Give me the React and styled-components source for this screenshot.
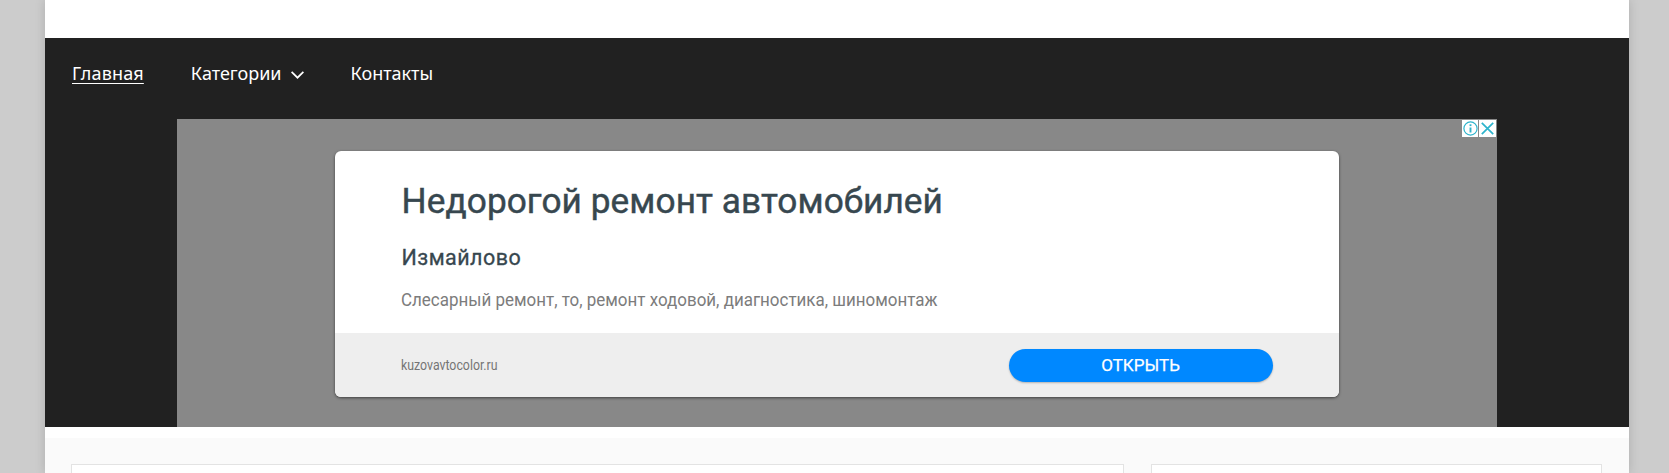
import React from "react";
import styled, { createGlobalStyle } from "styled-components";

const Global = createGlobalStyle`
  html, body { margin: 0; padding: 0; height: 473px; overflow: hidden; background: #cccccc; }
  * { box-sizing: border-box; }
`;
const Page = styled.div`
  width: 1584px; height: 473px; margin-left: 45px; background: #fff; overflow: hidden;
  box-shadow: 0 0 10px rgba(0,0,0,.15);
`;
const TopBar = styled.div`height: 38px; background: #fff;`;
const Nav = styled.div`
  background: #212121; height: 389px; display: flex; flex-direction: column;
`;
const Menu = styled.nav`
  height: 81px; display: flex; align-items: center; padding: 0 0 12px 27px; gap: 47px;
`;
const MenuLink = styled.a`
  font: 400 18px/24px "Noto Sans", sans-serif; color: #fff; display: inline-flex; align-items: center;
  text-decoration: ${p => (p.$active ? "underline" : "none")}; text-underline-offset: 3px; text-decoration-thickness: 1px;
  letter-spacing: ${p => (p.$active ? ".15px" : "0")};
`;
const Chevron = styled.svg`width: 15px; height: 15px; margin-left: 8px; margin-right: -1px; margin-top: 3px;`;
const Ad = styled.div`
  position: relative; width: 1320px; height: 308px; margin-left: 132px; background: #888888;
  display: flex; justify-content: center; align-items: flex-start; padding: 32px 1px 0 0;
`;
const Badges = styled.div`position: absolute; top: 1px; right: 1px; display: flex; gap: 1px;`;
const Badge = styled.div`
  width: ${p => p.$w}px; height: 17px; background: #fff; display: flex; align-items: center; justify-content: center;
`;
const Card = styled.div`
  width: 1004px; height: 246px; background: #fff; border-radius: 6px; overflow: hidden;
  box-shadow: 0 1px 3px rgba(0,0,0,.55); display: flex; flex-direction: column;
`;
const Body = styled.div`flex: 1; padding: 30px 66px 0 67px; font-family: Roboto, sans-serif;`;
const Title = styled.div`font: 400 35.2px/40px Roboto, sans-serif; color: #37474f; letter-spacing: .08px; -webkit-text-stroke: .45px #37474f;`;
const Sub = styled.div`font: 400 21.5px/24px Roboto, sans-serif; color: #37474f; margin-top: 25px; letter-spacing: .45px; -webkit-text-stroke: .3px #37474f;`;
const Desc = styled.div`
  font: 400 19px/22px Roboto, sans-serif; color: #7c7c7c; margin-top: 19px; margin-left: -1px; white-space: nowrap;
  transform: scaleX(.893); transform-origin: left;
`;
const Foot = styled.div`
  height: 64px; background: #eeeeee; display: flex; align-items: center; justify-content: space-between;
  padding: 0 66px;
`;
const Domain = styled.div`
  font: 400 14.5px/18px Roboto, sans-serif; color: #757575; transform: scaleX(.85); transform-origin: left; white-space: nowrap; margin-top: 2px;
`;
const Button = styled.div`
  width: 264px; height: 33px; border-radius: 17px; background: #0088ff; color: #fff;
  display: flex; align-items: center; justify-content: center; font: 400 17px/20px Roboto, sans-serif;
  -webkit-text-stroke: .25px #fff; box-shadow: 0 1px 2px rgba(0,0,0,.25);
`;
const Gap = styled.div`height: 11px; background: #fff;`;
const Content = styled.div`
  height: 35px; background: #fafafa; padding: 26px 0 0 26px; display: flex; gap: 27px;
`;
const Panel = styled.div`
  width: ${p => p.$w}px; height: 30px; background: #fff; border: 1px solid #e3e3e3;
`;

export default function App() {
  return (
    <>
      <Global />
      <Page>
        <TopBar />
        <Nav>
          <Menu>
            <MenuLink $active>Главная</MenuLink>
            <MenuLink>
              Категории
              <Chevron viewBox="0 0 14 14" fill="none" stroke="#fff" strokeWidth="1.6">
                <path d="M1.5 4.5 7 10l5.5-5.5" />
              </Chevron>
            </MenuLink>
            <MenuLink>Контакты</MenuLink>
          </Menu>
          <Ad>
            <Badges>
              <Badge $w={16}>
                <svg width="15" height="15" viewBox="0 0 15 15" fill="none" stroke="#2eb4cc">
                  <circle cx="7.5" cy="7.5" r="6.6" strokeWidth="1.2" />
                  <path d="M7.5 6.5v5" strokeWidth="1.9" />
                  <path d="M7.5 3.3v1.8" strokeWidth="1.9" />
                </svg>
              </Badge>
              <Badge $w={17}>
                <svg width="15" height="15" viewBox="0 0 15 15" fill="none" stroke="#2eb4cc" strokeWidth="1.7">
                  <path d="M1.8 1.8l11.4 11.4M13.2 1.8L1.8 13.2" />
                </svg>
              </Badge>
            </Badges>
            <Card>
              <Body>
                <Title>Недорогой ремонт автомобилей</Title>
                <Sub>Измайлово</Sub>
                <Desc>Слесарный ремонт, то, ремонт ходовой, диагностика, шиномонтаж</Desc>
              </Body>
              <Foot>
                <Domain>kuzovavtocolor.ru</Domain>
                <Button>ОТКРЫТЬ</Button>
              </Foot>
            </Card>
          </Ad>
        </Nav>
        <Gap />
        <Content>
          <Panel $w={1053} />
          <Panel $w={451} />
        </Content>
      </Page>
    </>
  );
}
